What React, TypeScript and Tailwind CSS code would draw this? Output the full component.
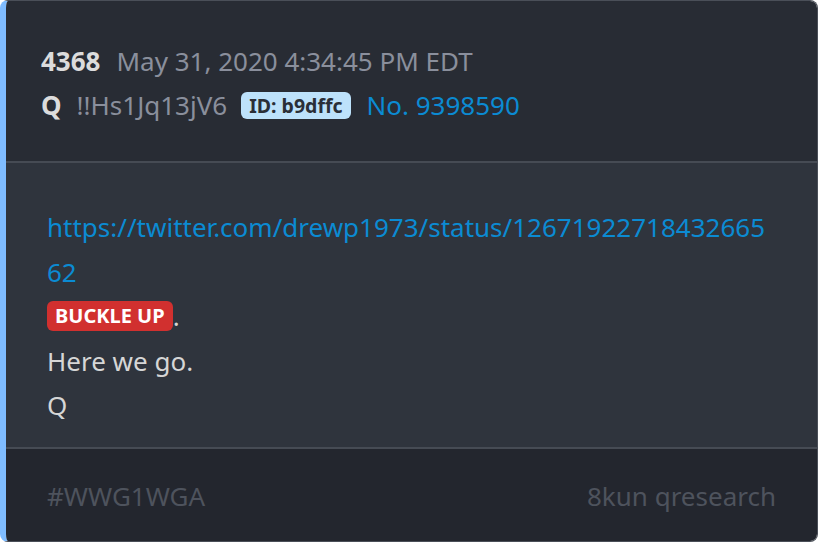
export default function App() {
  return (
    <div className="w-[818px] h-[542px] bg-white" style={{ fontFamily: '"Noto Sans", "Open Sans", sans-serif' }}>
      <div className="h-[542px] flex flex-col rounded-lg overflow-hidden border border-[#4a4f58] border-l-[6px] border-l-[#7fbcff]">
        <div className="bg-[#282c34] pl-[35px] pr-[41px] pt-[38px] pb-[34px] border-b-2 border-[#464b54] text-[26px] leading-[44px]">
          <div className="flex items-center">
            <span className="font-bold text-[#dcdcdc]">4368</span>
            <span className="ml-[16px] text-[#8a8f9c]">May 31, 2020 4:34:45 PM EDT</span>
          </div>
          <div className="flex items-center">
            <span className="font-bold text-[#dcdcdc]">Q</span>
            <span className="ml-[15px] text-[#8a8f9c]">!!Hs1Jq13jV6</span>
            <span className="ml-[14px] h-[27px] px-[8px] rounded-[6px] bg-[#bde2fb] text-[#2a2f37] font-bold text-[19.5px] leading-[27px]">ID: b9dffc</span>
            <span className="ml-[16px] text-[#0b8bd3]">No. 9398590</span>
          </div>
        </div>
        <div className="flex-1 bg-[#2f343d] pl-[41px] pr-[40px] pt-[42px] text-[26px] leading-[44.5px] text-[#d6d6d6]">
          <div className="text-[#0b8bd3] break-all">https://twitter.com/drewp1973/status/1267192271843266562</div>
          <div className="flex items-center">
            <span className="h-[30px] px-[8px] rounded-[6px] bg-[#d1302f] text-white font-bold text-[20px] leading-[30px]">BUCKLE UP</span>
            <span>.</span>
          </div>
          <div>Here we go.</div>
          <div>Q</div>
        </div>
        <div className="h-[94px] pt-[3px] bg-[#23262e] border-t-2 border-[#464b54] flex items-center justify-between pl-[41px] pr-[41px] text-[26px] text-[#4e535d]">
          <span>#WWG1WGA</span>
          <span>8kun qresearch</span>
        </div>
      </div>
    </div>
  );
}
